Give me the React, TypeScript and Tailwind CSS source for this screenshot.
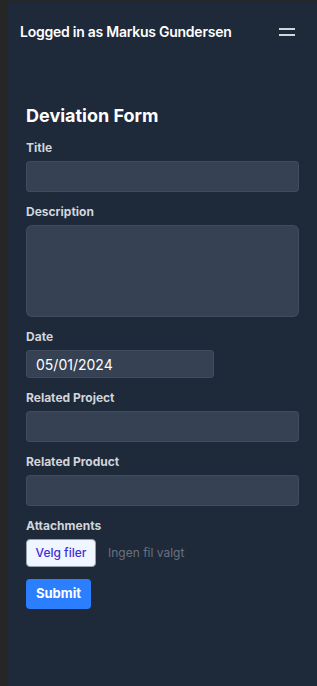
import { useState } from 'react';

const Field = ({ label, children }: { label: string; children: React.ReactNode }) => (
  <div className="flex flex-col">
    <label className="text-[12px] leading-4 font-bold text-gray-300 mb-[5px]">{label}</label>
    {children}
  </div>
)

const inputCls = 'w-full h-[31px] rounded-[4px] bg-gray-700 border border-gray-600/60 text-white text-sm px-2 outline-none'

const App = () => {
  const [date, setDate] = useState('05/01/2024');

  return (
    <div className="flex min-h-[686px] w-full bg-[#262626]" style={{ fontFamily: 'Inter, "Noto Sans", sans-serif' }}>
      <div className="w-2 shrink-0" />
      <div className="flex-1 flex flex-col bg-gray-800 mt-px">
        <header className="flex items-center justify-between h-[62px] pl-3 pr-[22px]">
          <span className="text-white text-sm font-semibold tracking-[-0.25px]">Logged in as Markus Gundersen</span>
          <button type="button" className="flex flex-col gap-1 w-4">
            <span className="block h-[2px] w-4 bg-gray-300" />
            <span className="block h-[2px] w-4 bg-gray-300" />
          </button>
        </header>
        <main className="flex flex-col gap-3 px-[18px] pt-[41px]">
          <h1 className="text-lg font-bold text-white leading-6">Deviation Form</h1>
          <Field label="Title">
            <input className={inputCls} />
          </Field>
          <Field label="Description">
            <textarea className="w-full h-[92px] rounded-md bg-gray-700 border border-gray-600/60 text-white text-sm p-2 outline-none resize-none" />
          </Field>
          <Field label="Date">
            <input
              className="w-[188px] h-[28px] rounded-[4px] bg-gray-700 border border-gray-600/60 text-white text-sm px-[9px] outline-none"
              value={date}
              onChange={(e) => setDate(e.target.value)}
            />
          </Field>
          <Field label="Related Project">
            <input className={inputCls} />
          </Field>
          <Field label="Related Product">
            <input className={inputCls} />
          </Field>
          <Field label="Attachments">
            <div className="flex items-center gap-3">
              <button type="button" className="h-[28px] w-[70px] rounded-[4px] bg-blue-50 border border-gray-400 text-[12px] font-medium text-indigo-700">Velg filer</button>
              <span className="text-[12px] text-gray-500">Ingen fil valgt</span>
            </div>
          </Field>
          <div>
            <button type="button" className="h-[30px] w-[65px] rounded-[4px] bg-blue-500 text-white text-[13px] font-bold">Submit</button>
          </div>
        </main>
      </div>
    </div>
  )
}

export default App
